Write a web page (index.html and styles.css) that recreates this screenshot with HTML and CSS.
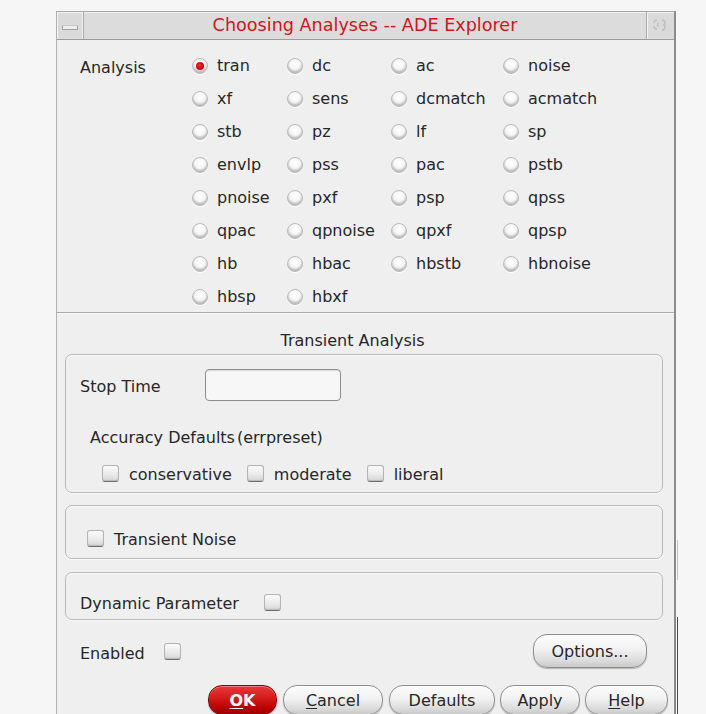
FILE: index.html
```html
<!DOCTYPE html>
<html>
<head>
<meta charset="utf-8">
<title>Choosing Analyses -- ADE Explorer</title>
<link rel="stylesheet" href="styles.css">
</head>
<body>
<div class="window">
  <div class="titlebar">
    <div class="tb-btn tb-left"><span class="minus"></span></div>
    <div class="title">Choosing Analyses -- ADE Explorer</div>
    <div class="tb-btn tb-right">
      <svg width="16" height="16" viewBox="0 0 16 16" class="max-icon">
        <path d="M5 2 Q2 2 2 5 M2 8 Q2 11 5 11 M6 5 L6 9" fill="none" stroke="#bdbdbd" stroke-width="1.3"/>
        <path d="M10 2 Q13 2 13 5 Q13 7 11 7 Q13 7 13 9 Q13 12 10 12" fill="none" stroke="#bdbdbd" stroke-width="1.3"/>
      </svg>
    </div>
  </div>
  <div class="analysis">
    <div class="analysis-label">Analysis</div>
    <div class="radios">
      <label class="radio"><span class="dot on"></span>tran</label>
      <label class="radio"><span class="dot"></span>dc</label>
      <label class="radio"><span class="dot"></span>ac</label>
      <label class="radio"><span class="dot"></span>noise</label>
      <label class="radio"><span class="dot"></span>xf</label>
      <label class="radio"><span class="dot"></span>sens</label>
      <label class="radio"><span class="dot"></span>dcmatch</label>
      <label class="radio"><span class="dot"></span>acmatch</label>
      <label class="radio"><span class="dot"></span>stb</label>
      <label class="radio"><span class="dot"></span>pz</label>
      <label class="radio"><span class="dot"></span>lf</label>
      <label class="radio"><span class="dot"></span>sp</label>
      <label class="radio"><span class="dot"></span>envlp</label>
      <label class="radio"><span class="dot"></span>pss</label>
      <label class="radio"><span class="dot"></span>pac</label>
      <label class="radio"><span class="dot"></span>pstb</label>
      <label class="radio"><span class="dot"></span>pnoise</label>
      <label class="radio"><span class="dot"></span>pxf</label>
      <label class="radio"><span class="dot"></span>psp</label>
      <label class="radio"><span class="dot"></span>qpss</label>
      <label class="radio"><span class="dot"></span>qpac</label>
      <label class="radio"><span class="dot"></span>qpnoise</label>
      <label class="radio"><span class="dot"></span>qpxf</label>
      <label class="radio"><span class="dot"></span>qpsp</label>
      <label class="radio"><span class="dot"></span>hb</label>
      <label class="radio"><span class="dot"></span>hbac</label>
      <label class="radio"><span class="dot"></span>hbstb</label>
      <label class="radio"><span class="dot"></span>hbnoise</label>
      <label class="radio"><span class="dot"></span>hbsp</label>
      <label class="radio"><span class="dot"></span>hbxf</label>
    </div>
  </div>
  <div class="sep"></div>
  <div class="lower">
    <div class="section-title">Transient Analysis</div>
    <div class="group g1">
      <div class="stop-row">
        <span class="stop-label">Stop Time</span>
        <span class="input"></span>
      </div>
      <div class="acc-label">Accuracy Defaults<span class="acc-paren">(errpreset)</span></div>
      <div class="acc-row">
        <label class="check"><span class="box"></span><span class="ctext">conservative</span></label>
        <label class="check"><span class="box"></span><span class="ctext">moderate</span></label>
        <label class="check"><span class="box"></span><span class="ctext">liberal</span></label>
      </div>
    </div>
    <div class="group g2">
      <label class="check"><span class="box"></span><span class="ctext">Transient Noise</span></label>
    </div>
    <div class="group g3">
      <span class="dyn-label">Dynamic Parameter</span>
      <span class="box"></span>
    </div>
    <div class="enabled-row">
      <span class="enabled-label">Enabled</span>
      <span class="box"></span>
      <span class="spacer"></span>
      <button class="btn btn-options">Options...</button>
    </div>
  </div>
  <div class="buttons">
    <button class="btn btn-ok"><u>O</u>K</button>
    <button class="btn btn-cancel"><u>C</u>ancel</button>
    <button class="btn btn-defaults">Defaults</button>
    <button class="btn btn-apply">Apply</button>
    <button class="btn btn-help"><u>H</u>elp</button>
  </div>
</div>
</body>
</html>
```
FILE: styles.css
```css
html, body {
  margin: 0;
  padding: 0;
  height: 714px;
  overflow: hidden;
}
body {
  background-color: #f5f6f5;
  background-image: linear-gradient(#4a4a4a, #4a4a4a), linear-gradient(#c4c4c4, #c4c4c4);
  background-repeat: no-repeat;
  background-position: 677px 617px, 677px 540px;
  background-size: 1px 100px, 1px 40px;
  font-family: "DejaVu Sans", "Verdana", sans-serif;
  font-size: 16px;
  color: #272727;
}
.window {
  margin: 11px 0 0 56px;
  width: 617px;
  height: 720px;
  border-top: 1px solid #a6a6a6;
  border-left: 1px solid #b0b0b0;
  border-right: 2px solid #8c8c8c;
  background: #efefef;
  box-sizing: content-box;
}
.titlebar {
  display: flex;
  height: 27px;
  background: #dcdcdc;
  border-bottom: 1px solid #9c9c9c;
  box-shadow: inset 0 1px 0 #f2f2f2;
}
.tb-btn {
  width: 26px;
  flex: none;
  display: flex;
  align-items: center;
  justify-content: center;
  background: #dadada;
}
.tb-left {
  border-right: 1px solid #a8a8a8;
  box-shadow: inset -1px 0 0 #f4f4f4, inset 1px 1px 0 #f4f4f4;
}
.tb-right {
  border-left: 1px solid #a8a8a8;
  box-shadow: inset 1px 1px 0 #f4f4f4;
  margin-right: 1px;
}
.minus {
  display: block;
  width: 14px;
  height: 3px;
  margin-top: 4px;
  background: #ededed;
  border: 1px solid #a0a0a0;
  border-top-color: #c8c8c8;
  border-radius: 1px;
}
.title {
  flex: 1;
  text-align: center;
  color: #d3141c;
  font-size: 17.6px;
  line-height: 27px;
  white-space: nowrap;
}
.analysis {
  display: flex;
  padding: 9px 0 0 23px;
}
.analysis-label {
  width: 112px;
  flex: none;
  line-height: 33px;
  padding-top: 2px;
}
.radios {
  display: grid;
  grid-template-columns: 95px 104px 112px 1fr;
  grid-auto-rows: 33px;
  margin-bottom: -1px;
}
.radio {
  display: flex;
  align-items: center;
  gap: 9px;
  white-space: nowrap;
}
.dot {
  width: 14px;
  height: 14px;
  flex: none;
  border-radius: 50%;
  border: 1px solid #b9b9b9;
  background: radial-gradient(circle at 50% 35%, #ffffff 0%, #f6f6f6 45%, #d8d8d8 85%, #bdbdbd 100%);
  box-shadow: inset 0 -2px 2px rgba(0,0,0,0.18), 0 1px 0 #fff;
  position: relative;
}
.dot.on::after {
  content: "";
  position: absolute;
  left: 3px;
  top: 3px;
  width: 8px;
  height: 8px;
  border-radius: 50%;
  background: radial-gradient(circle at 45% 40%, #ff2a2a 0%, #d60000 60%, #9a0000 100%);
}
.sep {
  border-top: 1px solid #a9a9a9;
  border-bottom: 1px solid #fbfbfb;
}
.lower {
  padding: 0 11px 0 8px;
}
.section-title {
  text-align: center;
  line-height: 20px;
  margin-top: 17px;
  padding-right: 23px;
}
.group {
  border: 1px solid #bababa;
  border-radius: 7px;
  box-shadow: inset 0 1px 0 #fafafa, 0 1px 0 #fafafa;
}
.g1 {
  margin-top: 3px;
  padding: 14px 14px 9px 14px;
}
.stop-row {
  display: flex;
  align-items: center;
  height: 32px;
}
.stop-label {
  width: 125px;
  flex: none;
  padding-top: 3px;
}
.input {
  width: 134px;
  height: 30px;
  border: 1px solid #8e8e8e;
  border-radius: 4px;
  background: #f7f7f7;
  box-shadow: inset 0 1px 1px rgba(0,0,0,0.12);
}
.acc-label {
  margin-top: 27px;
  line-height: 20px;
  padding-left: 10px;
}
.acc-paren {
  margin-left: 2px;
}
.acc-row {
  display: flex;
  align-items: center;
  height: 20px;
  margin-top: 15px;
  padding-left: 22px;
  gap: 15px;
}
.check {
  display: flex;
  align-items: center;
  gap: 10px;
  white-space: nowrap;
}
.ctext {
  padding-top: 2px;
}
.box {
  width: 15px;
  height: 15px;
  flex: none;
  display: inline-block;
  border: 1px solid #b4b4b4;
  border-bottom-color: #6f6f6f;
  border-radius: 3px;
  background: linear-gradient(#fbfbfb, #e9e9e9 60%, #d6d6d6);
  box-shadow: inset 0 -1px 1px rgba(0,0,0,0.15);
}
.g2 {
  margin-top: 12px;
  padding: 23px 0 10px 21px;
  height: 19px;
  display: flex;
  align-items: center;
}
.g3 {
  margin-top: 13px;
  padding: 20px 0 8px 14px;
  height: 18px;
  display: flex;
  align-items: center;
}
.dyn-label {
  margin-right: 25px;
  padding-top: 2px;
}
.enabled-row {
  display: flex;
  align-items: center;
  height: 34px;
  margin-top: 14px;
  padding-left: 15px;
  padding-right: 16px;
}
.enabled-label {
  margin-right: 19px;
  padding-top: 4px;
}
.spacer {
  flex: 1;
}
.btn {
  font-family: "DejaVu Sans", "Verdana", sans-serif;
  font-size: 16px;
  color: #272727;
  border: 1px solid #8f8f8f;
  background: linear-gradient(#fdfdfd 0%, #f1f1f1 45%, #dcdcdc 80%, #c9c9c9 100%);
  box-shadow: inset 0 1px 0 #ffffff, 0 1px 1px rgba(0,0,0,0.25);
  padding: 0;
  margin: 0;
}
.btn u {
  text-decoration-thickness: 1px;
  text-underline-offset: 2px;
}
.btn-options {
  width: 114px;
  height: 34px;
  border-radius: 14px;
}
.buttons {
  display: flex;
  justify-content: flex-end;
  gap: 6px;
  margin-top: 17px;
  padding-right: 6px;
}
.buttons .btn {
  height: 30px;
  border-radius: 14px;
}
.btn-ok {
  width: 69px;
  color: #ffffff;
  font-weight: bold;
  border-color: #8a0000;
  background: linear-gradient(#e83a3a 0%, #d21a1a 45%, #b70000 80%, #a00000 100%);
  box-shadow: inset 0 1px 0 #f07a7a, 0 1px 1px rgba(0,0,0,0.3);
}
.btn-cancel { width: 100px; }
.btn-defaults { width: 106px; }
.btn-apply { width: 80px; margin-left: -1px; }
.btn-help { width: 83px; margin-left: -1px; }
```
